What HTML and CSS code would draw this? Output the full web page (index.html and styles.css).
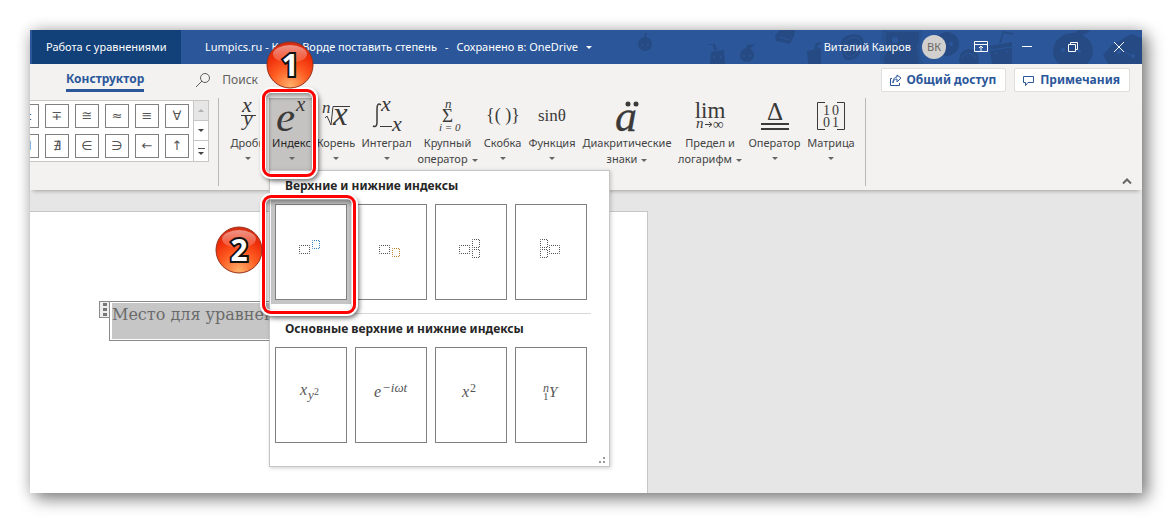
FILE: index.html
```html
<!DOCTYPE html>
<html lang="ru">
<head>
<meta charset="utf-8">
<title>Работа с уравнениями</title>
<link rel="stylesheet" href="styles.css">
</head>
<body>
<main class="window">
  <header class="titlebar">
    <svg class="pattern" width="512" height="34" viewBox="0 0 512 34" aria-hidden="true">
      <g fill="#264b84">
        <ellipse cx="15" cy="14" rx="7" ry="7"/><path d="M14 8l1-5h2l-1 4 3-2z"/>
        <path d="M81 22l13-2 1 14H80zM84 20l-1-5-4 0v-1h6l2 6z"/>
        <circle cx="117" cy="25" r="7"/><path d="M116 19l1-5 2 1 6-1-5 5z"/>
        <path d="M150 0h15l-1 6-4 8-14-3-1-5z"/>
        <path d="M177 21l14-3v16h-13zM184 19l2-6 5-1v2l-3 1-1 5z"/>
        <path d="M211 12c2-8 18-11 22-3 3 7-2 9-3 14-3 7-15 10-17 3-1-6-4-9-2-14z"/>
        <path d="M253 0h38c3 5-1 10-1 15 0 8 0 12 4 19h-42c-4-5-2-12 2-18-4-4-4-11-1-16z" opacity=".5"/>
        <path d="M257 2h31c3 8-2 10-1 17l2 15h-34c-2-6 0-10 4-15-4-4-4-11-2-17z"/>
        <circle cx="317" cy="14" r="12"/><circle cx="339" cy="29" r="10"/>
        <path d="M359 16l23-4v22h-20zM371 13l3-10 9 2v-2l-10-2-4 12z"/>
        <ellipse cx="443" cy="21" rx="20" ry="18"/><path d="M443 5q6-9 17-4-7 5-16 6z"/>
        <path d="M482 15l19-11 11 4v26h-34l-5-9z"/>
      </g>
      <g fill="none" stroke="#2b579a">
        <path d="M214 14c4-8 14-8 17-3 0 7-3 8-4 11-3 5-10 6-12 2z"/>
        <path d="M360 20l22-3M332 28c2-6 10-6 14 0M486 17l18 10M150 7l9 3"/>
      </g>
      <g fill="#2b579a">
        <circle cx="12" cy="15" r="1"/><circle cx="18" cy="15" r="1"/><circle cx="84" cy="27" r="1"/><circle cx="91" cy="27" r="1"/>
        <circle cx="114" cy="26" r="1"/><circle cx="120" cy="26" r="1"/><circle cx="218" cy="16" r="2"/><circle cx="225" cy="15" r="2"/>
        <circle cx="265" cy="10" r="3"/><circle cx="277" cy="19" r="2"/><circle cx="313" cy="14" r="2"/><circle cx="321" cy="14" r="2"/>
        <circle cx="366" cy="23" r="1"/><circle cx="377" cy="22" r="1"/><circle cx="433" cy="20" r="2"/><circle cx="449" cy="21" r="2"/>
        <circle cx="489" cy="22" r="2"/><circle cx="503" cy="26" r="2"/>
      </g>
    </svg>
    <div class="context-tab">Работа с уравнениями</div>
    <button class="doc-title" type="button"><span>Lumpics.ru - Как в Ворде поставить степень</span><span>-</span><span>Сохранено в: OneDrive</span><i class="caret"></i></button>
    <div class="account"><span>Виталий Каиров</span><span class="avatar">ВК</span></div>
    <div class="controls">
      <button type="button" aria-label="Параметры ленты"><svg width="14" height="12" viewBox="0 0 14 12"><path d="M.5.5h13v10H.5zM.5 3.5h13M7 10V5M5 7l2-2 2 2"/></svg></button>
      <button type="button" aria-label="Свернуть"><svg width="12" height="12" viewBox="0 0 12 12"><path d="M1 5.500h10"/></svg></button>
      <button type="button" aria-label="Восстановить"><svg width="12" height="12" viewBox="0 0 12 12"><path d="M1.500 3.500h7v7h-7zM3.500 3V1.500h7v7H9"/></svg></button>
      <button type="button" aria-label="Закрыть"><svg width="12" height="12" viewBox="0 0 12 12"><path d="M1 1l10 10M11 1L1 11"/></svg></button>
    </div>
  </header>

  <nav class="tabs">
    <a class="tab" href="#design">Конструктор</a>
    <button class="search" type="button"><svg width="16" height="16" viewBox="0 0 16 16"><circle cx="10" cy="6" r="4.500"/><path d="M7 9l-6 6"/></svg>Поиск</button>
    <div class="actions">
      <button type="button"><svg width="13" height="13" viewBox="0 0 13 13"><path d="M3 4.500H1.500v7h9V9M4 9c0-3 2-4 4-4v3l4-4-4-3v2C5 3 4 6 4 9z"/></svg>Общий доступ</button>
      <button type="button"><svg width="13" height="13" viewBox="0 0 13 13"><path d="M1.500 2.500h10v6H6l-2.500 3v-3h-2z"/></svg>Примечания</button>
    </div>
  </nav>

  <section class="ribbon" id="design">
    <div class="gallery">
      <div class="symbols">
        <button type="button">±</button><button type="button">∓</button><button type="button">≅</button><button type="button">≈</button><button type="button">≡</button><button type="button">∀</button>
        <button type="button">∃</button><button type="button">∄</button><button type="button">∈</button><button type="button">∋</button><button type="button">←</button><button type="button">↑</button>
      </div>
      <div class="scroller">
        <button class="off" type="button" aria-label="Вверх"><i class="caret up"></i></button>
        <button type="button" aria-label="Вниз"><i class="caret"></i></button>
        <button class="more" type="button" aria-label="Ещё"><i class="caret"></i></button>
      </div>
    </div>

    <div class="structures">
      <button class="tool" type="button">
        <svg viewBox="0 0 48 36"><text x="18" y="13" font-size="22">x</text><path d="M17 16.500h15"/><text x="19" y="26" font-size="22">y</text></svg>
        <span>Дробь</span><i class="caret"></i></button>
      <div class="index">
        <button class="tool open" type="button" aria-expanded="true">
          <svg viewBox="0 0 48 36"><text x="8" y="32" font-size="43">e</text><text x="28" y="12" font-size="21">x</text></svg>
          <span>Индекс</span><i class="caret"></i></button>

        <div class="menu">
          <h2>Верхние и нижние индексы</h2>
          <div class="cells">
            <button class="cell chosen" type="button" aria-label="Верхний индекс"><svg viewBox="0 0 32 32"><path class="dot" d="M4.500 13.500h10v8h-10z"/><path class="dot blue" d="M17.500 8.500h7v8h-7z"/></svg></button>
            <button class="cell" type="button" aria-label="Нижний индекс"><svg viewBox="0 0 32 32"><path class="dot" d="M4.500 13.500h10v8h-10z"/><path class="dot tan" d="M17.500 16.500h7v8h-7z"/></svg></button>
            <button class="cell" type="button" aria-label="Верхний и нижний индекс"><svg viewBox="0 0 32 32"><path class="dot" d="M4.500 13.500h10v8h-10z"/><path class="dot" d="M17.500 7.500h7v8h-7zM17.500 17.500h7v8h-7z"/></svg></button>
            <button class="cell" type="button" aria-label="Левые индексы"><svg viewBox="0 0 32 32"><path class="dot" d="M14.500 13.500h10v8h-10z"/><path class="dot" d="M5.500 7.500h7v8h-7zM5.500 17.500h7v8h-7z"/></svg></button>
          </div>
          <hr>
          <h2>Основные верхние и нижние индексы</h2>
          <div class="cells">
            <button class="cell formula" type="button"><svg viewBox="0 0 40 32"><text x="9" y="18" font-size="16">x</text><text x="17" y="22" font-size="13">y</text><text class="up" x="23" y="18" font-size="10">2</text></svg></button>
            <button class="cell formula" type="button"><svg viewBox="0 0 40 32"><text x="3" y="20" font-size="16">e</text><text x="11" y="15" font-size="13">−iωt</text></svg></button>
            <button class="cell formula" type="button"><svg viewBox="0 0 40 32"><text x="11" y="20" font-size="16">x</text><text class="up" x="19" y="15" font-size="12">2</text></svg></button>
            <button class="cell formula" type="button"><svg viewBox="0 0 40 32"><text x="12" y="15" font-size="12">n</text><text class="up" x="12" y="23" font-size="11">1</text><text x="18" y="20" font-size="15">Y</text></svg></button>
          </div>
          <svg class="grip" width="8" height="8" viewBox="0 0 8 8"><path d="M4 0h2v2H4zM0 4h2v2H0zM4 4h2v2H4z"/></svg>
          <div class="ring ring-cell"></div>
          <svg class="badge badge-two" width="48" height="48" viewBox="0 0 48 48"><use href="#ball"/><text x="24" y="35">2</text></svg>
        </div>
        <div class="ring ring-tool"></div>
        <svg class="badge badge-one" width="48" height="48" viewBox="0 0 48 48">
          <defs>
            <radialGradient id="glow" cx=".5" cy=".95" r=".9"><stop offset="0" stop-color="#ffb069"/><stop offset=".45" stop-color="#ff5c22"/><stop offset=".8" stop-color="#ee2c08"/><stop offset="1" stop-color="#d92c10"/></radialGradient>
            <linearGradient id="gloss" x2="0" y2="1"><stop offset="0" stop-color="#fff" stop-opacity=".5"/><stop offset="1" stop-color="#fff" stop-opacity=".12"/></linearGradient>
            <g id="ball"><circle cx="24" cy="24" r="23" fill="url(#glow)" stroke="#96301a"/><ellipse cx="24" cy="13" rx="17" ry="9" fill="url(#gloss)"/></g>
          </defs>
          <use href="#ball"/><text x="24" y="35">1</text>
        </svg>
      </div>
      <button class="tool" type="button">
        <svg viewBox="0 0 48 36"><text x="10" y="14" font-size="17">n</text><path d="M13 19l2-2 4 9 2-18.500h17"/><text x="21" y="26" font-size="33">x</text></svg>
        <span>Корень</span><i class="caret"></i></button>
      <button class="tool" type="button">
        <svg viewBox="0 0 48 36"><path d="M18 6q-4-3-4 4v13q0 6-4 4" stroke-width="1.500"/><text x="18" y="12" font-size="22">x</text><path d="M17 27.500h12"/><text x="29" y="32" font-size="22">x</text></svg>
        <span>Интеграл</span><i class="caret"></i></button>
      <button class="tool" type="button">
        <svg viewBox="0 0 48 36"><text x="21" y="9" font-size="13">n</text><text class="up" x="18" y="23" font-size="19">Σ</text><text x="15" y="32" font-size="11">i = 0</text></svg>
        <span>Крупный<br>оператор<i class="caret"></i></span></button>
      <button class="tool" type="button">
        <svg viewBox="0 0 48 36"><text class="up mid" x="24" y="22" font-size="18">{( )}</text></svg>
        <span>Скобка</span><i class="caret"></i></button>
      <button class="tool" type="button">
        <svg viewBox="0 0 48 36"><text class="up mid" x="24" y="22" font-size="17">sinθ</text></svg>
        <span>Функция</span><i class="caret"></i></button>
      <button class="tool" type="button">
        <svg viewBox="0 0 48 36"><text class="heavy" x="12" y="32" font-size="44">a</text><circle cx="25" cy="5" r="2.500"/><circle cx="33" cy="5" r="2.500"/></svg>
        <span>Диакритические<br>знаки<i class="caret"></i></span></button>
      <button class="tool" type="button">
        <svg viewBox="0 0 48 36"><text class="up mid" x="24" y="19" font-size="23">lim</text><text x="10" y="29" font-size="15">n</text><path d="M19 25.500h6M23 23l3 2.500-3 2.500"/><text class="up" x="27" y="30" font-size="15">∞</text></svg>
        <span>Предел и<br>логарифм<i class="caret"></i></span></button>
      <button class="tool" type="button">
        <svg viewBox="0 0 48 36"><text class="up mid" x="24" y="21" font-size="25">Δ</text><path d="M10 25h28M10 30h28" stroke-width="2"/></svg>
        <span>Оператор</span><i class="caret"></i></button>
      <button class="tool" type="button">
        <svg viewBox="0 0 48 36"><path d="M18 3.500h-7.500v27H18M30 3.500h7.500v27H30"/><text class="up" x="16" y="16" font-size="14">1</text><text class="up" x="25" y="16" font-size="14">0</text><text class="up" x="16" y="28" font-size="14">0</text><text class="up" x="25" y="28" font-size="14">1</text></svg>
        <span>Матрица</span><i class="caret"></i></button>
    </div>
    <button class="collapse" type="button" aria-label="Свернуть ленту"><svg width="10" height="7" viewBox="0 0 10 7"><path d="M1 5.500l4-4 4 4"/></svg></button>
  </section>

  <section class="workspace">
    <article class="page">
      <div class="equation"><span class="handle"><i></i><i></i><i></i></span><div class="field"><p>Место для уравнения.</p></div></div>
    </article>
  </section>
</main>
</body>
</html>
```
FILE: styles.css
```css
* { box-sizing: border-box; }
body {
  margin: 0;
  min-height: 100vh;
  padding: 30px;
  display: flex;
  background: #fff;
  font: 11px/16px "Noto Sans", "Open Sans", sans-serif;
  color: #444;
}
button { font: inherit; color: inherit; padding: 0; border: 0; background: none; }
.window {
  flex: 1;
  min-width: 0;
  display: flex;
  flex-direction: column;
  background: #e6e6e6;
  box-shadow: 6px 6px 16px rgba(0, 0, 0, .45), 0 0 14px rgba(0, 0, 0, .2);
}

.caret { display: inline-block; border: 3px solid transparent; border-top-color: currentColor; border-bottom: 0; vertical-align: middle; }
.caret.up { border-top: 0; border-bottom: 3px solid #b0b0b0; }

/* Title bar */
.titlebar { position: relative; display: flex; align-items: stretch; height: 34px; padding-left: 2px; background: #2b579a; color: #fff; white-space: nowrap; }
.pattern { position: absolute; right: 0; top: 0; }
.context-tab { width: 149px; padding-left: 14px; line-height: 33px; background: #124078; }
.doc-title { display: flex; align-items: center; gap: 8px; padding-left: 24px; }
.account { position: relative; margin-left: auto; display: flex; align-items: center; gap: 11px; padding-right: 12px; }
.avatar { width: 24px; height: 24px; border-radius: 50%; background: #d2d0ce; color: #6b6764; line-height: 24px; text-align: center; }
.controls { position: relative; display: flex; }
.controls button { width: 46px; display: grid; place-items: center; }
.controls svg { fill: none; stroke: #fff; }

/* Tab row */
.tabs { display: flex; align-items: center; height: 34px; padding: 0 12px 2px 36px; background: #f3f2f1; font-size: 12px; }
.tab { align-self: flex-start; margin-top: 6px; height: 22px; border-bottom: 3px solid #2b579a; color: #2b579a; line-height: 18px; font-weight: 700; text-decoration: none; }
.search { display: flex; align-items: center; gap: 11px; margin-left: 51px; color: #605e5c; }
.search svg { fill: none; stroke: #605e5c; }
.actions { margin-left: auto; display: flex; gap: 8px; }
.actions button { display: flex; align-items: center; gap: 5px; height: 24px; padding: 0 9px 0 7px; border: 1px solid #e1dfdd; border-radius: 2px; background: #fff; color: #2b579a; font-weight: 700; }
.actions svg { fill: none; stroke: #2b579a; }

/* Ribbon */
.ribbon { position: relative; z-index: 1; display: flex; align-items: flex-start; height: 92px; background: #f3f2f1; box-shadow: 0 4px 4px -3px rgba(0, 0, 0, .3); }
.gallery { display: flex; justify-content: flex-end; width: 179px; height: 62px; margin-top: 2px; border: 1px solid #c8c6c4; border-left: 0; background: #fff; overflow: hidden; }
.symbols { flex: none; display: grid; grid-template-columns: repeat(6, 24px); gap: 6px; align-content: start; padding: 3px 4px 0 0; }
.symbols button { height: 24px; border: 1px solid #808080; background: #fff; font: 13px/20px "DejaVu Sans", sans-serif; color: #555; }
.scroller { flex: none; width: 15px; display: grid; grid-template-rows: 20px 20px 20px; border-left: 1px solid #c8c6c4; }
.scroller button { display: grid; place-items: center; border-bottom: 1px solid #c8c6c4; }
.scroller .off { background: #e6e6e6; }
.scroller .more { border-bottom: 0; align-content: center; gap: 3px; }
.scroller .more::before { content: ""; width: 7px; height: 1px; background: #555; }

.structures {
  display: grid;
  grid-template-columns: 43px 45px 44px 57px 65px 45px 54px 96px 70px 59px 54px;
  height: 88px;
  margin-left: 9px;
  padding: 0 7px;
  border: 1px solid #bab8b6;
  border-width: 0 1px;
}
.tool { display: flex; flex-direction: column; align-items: center; width: 100%; height: 76px; padding-top: 1px; text-align: center; white-space: nowrap; }
.tool svg { flex: none; width: 48px; height: 36px; fill: #3b3a39; overflow: visible; }
.tool path { fill: none; stroke: #3b3a39; }
.tool .caret { color: #666; }
.tool > .caret { margin-top: 6px; }
.tool span .caret { margin-left: 4px; }
svg text { font-family: "Liberation Serif", serif; font-style: italic; }
svg text.up { font-style: normal; }
svg text.mid { text-anchor: middle; }
svg text.heavy { stroke: #3b3a39; stroke-width: .3; }

.index { position: relative; }
.tool.open { background: #c5c3c1; color: #262626; box-shadow: inset 0 0 3px #888; }

.collapse { margin-left: auto; align-self: flex-end; padding: 0 10px 5px; line-height: 0; }
.collapse svg { fill: none; stroke: #666; stroke-width: 2; }

/* Drop-down gallery */
.menu { position: absolute; left: 0; top: 72px; width: 341px; padding: 7px 18px 23px 5px; border: 1px solid #c6c6c6; background: #fff; box-shadow: 1px 1px 4px rgba(0, 0, 0, .2); }
.menu h2 { margin: 0 0 10px 10px; font-size: 12px; line-height: 16px; font-weight: 700; color: #262626; white-space: nowrap; }
.menu hr { margin: 13px 0 7px; border: 0; border-top: 1px solid #d8d8d8; }
.cells { display: flex; gap: 8px; }
.cell { width: 72px; height: 96px; display: grid; place-items: center; border: 1px solid #808080; background: #fff; }
.cell.chosen { box-shadow: 0 0 0 4px #c5c5c5; }
.cell svg { width: 32px; height: 32px; margin-top: -8px; fill: #555; overflow: visible; }
.cell.formula svg { width: 40px; margin-top: -4px; }
.dot { fill: none; stroke: #555; stroke-dasharray: 1 1; stroke-dashoffset: .5; }
.dot.blue { stroke: #3a7fc0; }
.dot.tan { stroke: #b98034; }
.grip { position: absolute; right: 2px; bottom: 1px; fill: #999; }

/* Step callouts */
.ring { position: absolute; border: 3px solid #f00; border-radius: 9px; box-shadow: 0 0 0 2px #fff, inset 0 0 0 1px #fff, 2px 3px 5px 1px rgba(0, 0, 0, .6), inset 1px 3px 5px 1px rgba(0, 0, 0, .4); pointer-events: none; }
.ring-tool { left: -7px; top: -9px; width: 54px; height: 88px; }
.ring-cell { left: -8px; top: 24px; width: 94px; height: 119px; }
.badge { position: absolute; }
.badge-one { left: -3px; top: -57px; }
.badge-two { left: -55px; top: 55px; }
.badge text { fill: #fff; stroke: #111; stroke-width: 4; paint-order: stroke; font: 700 30px "Noto Sans", sans-serif; text-anchor: middle; }

/* Document */
.workspace { flex: 1; padding-top: 21px; display: flex; }
.page { width: 618px; padding: 89px 0 0 69px; border: 1px solid #c6c6c6; border-width: 1px 1px 0 0; background: #fff; }
.equation { display: flex; align-items: flex-start; }
.handle { width: 11px; height: 17px; margin-right: -1px; display: grid; align-content: center; justify-content: center; gap: 2px; border: 1px solid #8a8a8a; background: #eee; }
.handle i { width: 4px; height: 3px; background: #777; }
.field { width: 240px; height: 40px; padding: 1px 2px; border: 1px solid #8a8a8a; }
.field p { margin: 0; height: 36px; background: #c6c6c6; color: #6b6b6b; font: 16px/24px "DejaVu Serif", serif; white-space: nowrap; overflow: hidden; }
```
